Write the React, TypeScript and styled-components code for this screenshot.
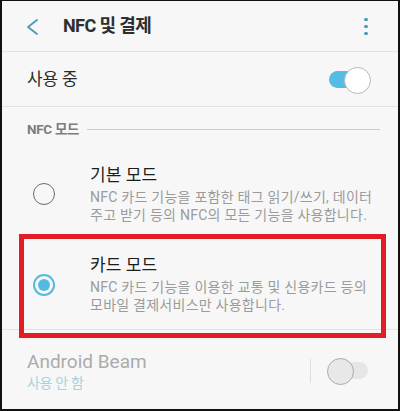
import React from "react";
import styled, { createGlobalStyle } from "styled-components";

const Global = createGlobalStyle`
  html, body { margin: 0; padding: 0; background: #f7f7f7; }
  * { box-sizing: border-box; }
  body { font-family: Roboto, "Noto Sans CJK KR", sans-serif; }
`;

const Frame = styled.div`
  width: 400px;
  height: 411px;
  border-style: solid;
  border-color: #111;
  border-width: 1px 2px 2px 2px;
  background: #f7f7f7;
  display: flex;
  flex-direction: column;
  overflow: hidden;
`;

const Header = styled.header`
  height: 51px;
  flex: none;
  display: flex;
  align-items: center;
  padding: 0 30px 0 23px;
  border-bottom: 1px solid #e2e2e2;
`;

const BackIcon = styled.svg`
  width: 14px;
  height: 18px;
  flex: none;
  margin-top: 2px;
`;

const Title = styled.h1`
  margin: 0 0 0 24px;
  font-size: 18px;
  font-weight: 700;
  color: #2e2e2e;
  letter-spacing: -0.6px;
  line-height: 24px;
  flex: 1;
`;

const Kebab = styled.div`
  display: flex;
  flex-direction: column;
  gap: 3.5px;
  width: 4px;
  margin-top: 1px;
`;

const Dot = styled.span`
  width: 3.6px;
  height: 3.6px;
  border-radius: 50%;
  background: #4a9ab7;
`;

const ToggleRow = styled.div`
  height: 55px;
  flex: none;
  display: flex;
  align-items: center;
  justify-content: space-between;
  padding: 0 27px 0 25px;
  border-bottom: 1px solid #e2e2e2;
`;

const RowLabel = styled.span`
  font-size: 17px;
  color: #2a2a2a;
  letter-spacing: -0.2px;
  line-height: 22px;
`;

const Switch = styled.div<{ $on: boolean }>`
  position: relative;
  width: 43px;
  height: 25px;
  flex: none;
  &::before {
    content: "";
    position: absolute;
    left: 1px;
    right: 2px;
    top: 4px;
    height: 17px;
    border-radius: 9px;
    background: ${(p) => (p.$on ? "#55bce5" : "#e6e6e6")};
  }
  &::after {
    content: "";
    position: absolute;
    top: 0;
    ${(p) => (p.$on ? "right: 0;" : "left: 0;")}
    width: 25px;
    height: 25px;
    border-radius: 50%;
    background: ${(p) => (p.$on ? "#ffffff" : "#e8e8e8")};
    border: 1px solid ${(p) => (p.$on ? "#b8b8b8" : "#a9a9a9")};
  }
`;

const SectionHeader = styled.div`
  height: 42px;
  flex: none;
  display: flex;
  align-items: center;
  gap: 8px;
  padding: 2px 18px 0 25px;
`;

const SectionLabel = styled.span`
  font-size: 13.5px;
  font-weight: 700;
  color: #7c7c7c;
  letter-spacing: -0.3px;
  line-height: 16px;
`;

const SectionLine = styled.span`
  flex: 1;
  height: 1px;
  background: #cccccc;
`;

const Item = styled.div<{ $divider?: boolean }>`
  position: relative;
  height: ${(p) => (p.$divider ? 91 : 90)}px;
  flex: none;
  display: flex;
  align-items: center;
  padding: 0 10px 0 31px;
  border-bottom: ${(p) => (p.$divider ? "1px solid #e2e2e2" : "none")};
`;

const Radio = styled.span<{ $checked: boolean }>`
  width: 22px;
  height: 22px;
  flex: none;
  border-radius: 50%;
  border: ${(p) => (p.$checked ? "2px solid #56b9e2" : "1.6px solid #6a6a6a")};
  display: grid;
  place-items: center;
  margin-top: ${(p) => (p.$checked ? 2 : 0)}px;
  &::after {
    content: "";
    width: 12px;
    height: 12px;
    border-radius: 50%;
    background: #56b9e2;
    display: ${(p) => (p.$checked ? "block" : "none")};
  }
`;

const ItemText = styled.div`
  margin-left: 35px;
  display: flex;
  flex-direction: column;
`;

const ItemTitle = styled.div`
  font-size: 17px;
  color: #1e1e1e;
  letter-spacing: 0.1px;
  line-height: 22px;
`;

const ItemDesc = styled.div`
  margin-top: 2px;
  font-size: 14px;
  color: #9b9b9b;
  letter-spacing: 0.25px;
  line-height: 18px;
  white-space: pre;
`;

const Highlight = styled.div`
  position: absolute;
  top: -5px;
  left: 17px;
  right: 12px;
  bottom: -9px;
  border: 5px solid #e31d25;
  pointer-events: none;
`;

const BeamRow = styled.div`
  flex: 1;
  display: flex;
  align-items: center;
  padding: 2px 28px 0 25px;
`;

const BeamText = styled.div`
  flex: 1;
  display: flex;
  flex-direction: column;
`;

const BeamTitle = styled.div`
  font-size: 19px;
  color: #ababab;
  line-height: 24px;
`;

const BeamSub = styled.div`
  font-size: 14px;
  color: #a8d2e2;
  letter-spacing: -0.3px;
  line-height: 18px;
`;

const VSep = styled.span`
  width: 1px;
  height: 24px;
  background: #dddddd;
  margin-right: 16px;
`;

export default function App() {
  return (
    <>
      <Global />
      <Frame>
        <Header>
          <BackIcon viewBox="0 0 14 18">
            <polyline
              points="12,2 3,9 12,16"
              fill="none"
              stroke="#4a9ab7"
              strokeWidth="1.8"
              strokeLinecap="round"
              strokeLinejoin="round"
            />
          </BackIcon>
          <Title>NFC 및 결제</Title>
          <Kebab>
            <Dot />
            <Dot />
            <Dot />
          </Kebab>
        </Header>
        <ToggleRow>
          <RowLabel>사용 중</RowLabel>
          <Switch $on />
        </ToggleRow>
        <SectionHeader>
          <SectionLabel>NFC 모드</SectionLabel>
          <SectionLine />
        </SectionHeader>
        <Item>
          <Radio $checked={false} />
          <ItemText>
            <ItemTitle>기본 모드</ItemTitle>
            <ItemDesc>
              {"NFC 카드 기능을 포함한 태그 읽기/쓰기, 데이터\n주고 받기 등의 NFC의 모든 기능을 사용합니다."}
            </ItemDesc>
          </ItemText>
        </Item>
        <Item $divider>
          <Radio $checked />
          <ItemText>
            <ItemTitle>카드 모드</ItemTitle>
            <ItemDesc>
              {"NFC 카드 기능을 이용한 교통 및 신용카드 등의\n모바일 결제서비스만 사용합니다."}
            </ItemDesc>
          </ItemText>
          <Highlight />
        </Item>
        <BeamRow>
          <BeamText>
            <BeamTitle>Android Beam</BeamTitle>
            <BeamSub>사용 안 함</BeamSub>
          </BeamText>
          <VSep />
          <Switch $on={false} />
        </BeamRow>
      </Frame>
    </>
  );
}
